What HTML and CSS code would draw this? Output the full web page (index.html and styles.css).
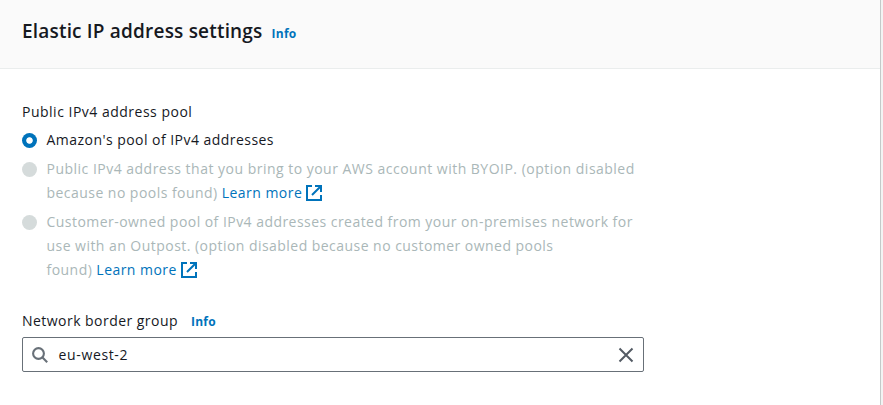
FILE: index.html
```html
<!DOCTYPE html>
<html lang="en">
<head>
<meta charset="utf-8">
<title>Elastic IP address settings</title>
<link rel="stylesheet" href="styles.css">
</head>
<body>
<section class="panel">
  <header class="panel-header"><h2>Elastic IP address settings</h2><a class="info">Info</a></header>
  <div class="panel-body">
    <div class="label pool">Public IPv4 address pool</div>
    <div class="option"><i class="radio checked"></i><p>Amazon's pool of IPv4 addresses</p></div>
    <div class="option disabled"><i class="radio"></i><p><span class="wide">Public IPv4 address that you bring to your AWS account with BYOIP. (option disabled</span><br>because no pools found) <a class="learn">Learn more</a><svg class="ext" viewBox="0 0 16 16"><path d="M6 1H1v14h14v-5M9 1h6v6M14.500 1.500 6 10"/></svg></p></div>
    <div class="option disabled"><i class="radio"></i><p>Customer-owned pool of IPv4 addresses created from your on-premises network for<br>use with an Outpost. (option disabled because no customer owned pools<br>found) <a class="learn">Learn more</a><svg class="ext" viewBox="0 0 16 16"><path d="M6 1H1v14h14v-5M9 1h6v6M14.500 1.500 6 10"/></svg></p></div>
    <div class="label group"><span>Network border group</span><a class="info">Info</a></div>
    <div class="field"><svg class="search" viewBox="0 0 16 16"><circle cx="6.500" cy="6.500" r="5.400"/><path d="m10.500 10.500 4.700 4.700"/></svg><span class="value">eu-west-2</span><svg class="clear" viewBox="0 0 16 16"><path d="m1.500 1.500 13 13m0-13-13 13"/></svg></div>
  </div>
</section>
</body>
</html>
```
FILE: styles.css
```css
* { box-sizing: border-box; }
body { margin: 0; background: #f2f3f3; font: 14px/24px "Open Sans", "Noto Sans", sans-serif; letter-spacing: .46px; color: #16191f; }
.panel { width: 881px; height: 405px; background: #fff; border-right: 1px solid #c4c9c9; }
.panel-header { height: 69px; padding: 0 22px 6px; display: flex; align-items: center; gap: 9px; background: #fafafa; border-bottom: 1px solid #eaeded; }
h2 { margin: 0; font-size: 19px; font-weight: 600; letter-spacing: .19px; }
.info { font-size: 12px; font-weight: 700; letter-spacing: .25px; color: #0073bb; }
.panel-header .info { padding-top: 5px; }
.panel-body { padding: 31px 22px; }
.label { display: flex; margin-bottom: 4px; }
.pool { letter-spacing: .5px; }
.option { display: flex; gap: 9.5px; margin-bottom: 5px; white-space: nowrap; }
.option p { margin: 0; }
.disabled { color: #aab7b8; font-weight: 500; letter-spacing: .46px; }
.wide { letter-spacing: .485px; }
.radio { flex: none; width: 15px; height: 15px; margin-top: 5px; border-radius: 50%; background: #d5dbdb; }
.checked { background: radial-gradient(circle, #fff 2.8px, #0073bb 3.7px); }
.learn { color: #0073bb; }
svg { flex: none; fill: none; stroke: #545b64; stroke-width: 2; }
.ext { width: 16px; height: 16px; margin-left: 4px; vertical-align: -3px; stroke: #0073bb; }
.group { gap: 13px; margin-top: 27px; }
.group .info { padding-top: 1px; height: 24px; }
.field { width: 622px; height: 35px; display: flex; align-items: center; padding: 0 9px; border: 1px solid #687078; border-radius: 2px; }
.search, .clear { width: 16px; height: 16px; }
.search { stroke: #687078; stroke-width: 2.1; }
.value { margin-left: 10.5px; flex: 1; letter-spacing: .65px; }
```
